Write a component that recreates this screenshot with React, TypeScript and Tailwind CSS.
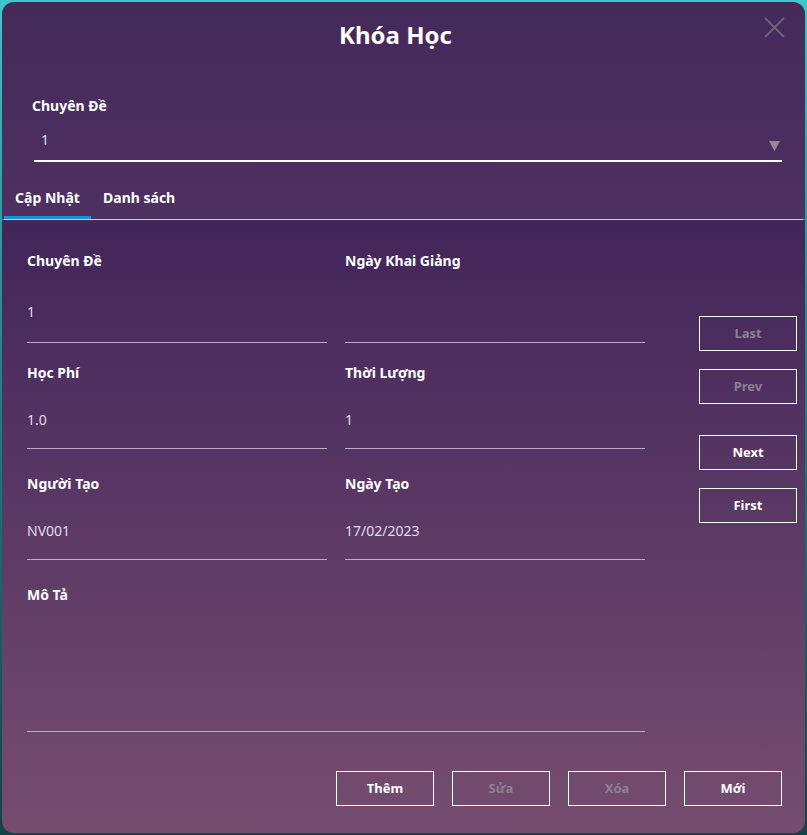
import React from "react";

const font = { fontFamily: '"Noto Sans", "Open Sans", sans-serif' };

function Field({ label, value, valueTop, pb }: { label: string; value?: string; valueTop: string; pb: string }) {
  return (
    <div className="flex flex-col">
      <div className="h-[20px] text-[14px] font-bold leading-[20px] text-white">{label}</div>
      <div className={`${valueTop} ${pb} h-auto border-b border-[#b9aec4]`}>
        <div className="h-[20px] text-[14px] leading-[20px] text-[#e4dcec]">{value ?? "\u00a0"}</div>
      </div>
    </div>
  );
}

function Btn({ label, disabled }: { label: string; disabled?: boolean }) {
  return (
    <div
      className={`flex h-[35px] w-[98px] items-center justify-center border-[1.5px] border-white text-[13px] font-bold ${
        disabled ? "text-[#8a8290]" : "text-white"
      }`}
    >
      {label}
    </div>
  );
}

export default function App() {
  return (
    <div
      className="h-[835px] w-[807px] overflow-hidden bg-gradient-to-b from-[#3fc6c9] via-[#1d7c7f] to-[#124445] p-[2px]"
      style={font}
    >
      <div className="flex h-[831px] w-[803px] flex-col overflow-hidden rounded-[12px]">
        {/* top part */}
        <div className="relative flex h-[217px] flex-col bg-gradient-to-b from-[#44295b] to-[#4e3161]">
          <div className="pr-[16px] pt-[16px] text-center text-[24px] font-bold leading-[34px] text-white">Khóa Học</div>
          <svg className="absolute right-[20px] top-[15px]" width="21" height="21" viewBox="0 0 21 21">
            <path d="M1 1 L20 20 M20 1 L1 20" stroke="#6d6470" strokeWidth="2" />
          </svg>
          <div className="ml-[30px] mt-[44px] h-[20px] text-[14px] font-bold leading-[20px] text-white">Chuyên Đề</div>
          <div className="relative ml-[32px] mr-[23px] mt-[14px] flex h-[32px] items-start border-b-2 border-white">
            <span className="ml-[7px] text-[14px] leading-[20px] text-[#e4dcec]">1</span>
            <svg className="absolute right-[2px] top-[11px]" width="11" height="10" viewBox="0 0 11 10">
              <path d="M0 0 L11 0 L5.5 10 Z" fill="#8f8a94" />
            </svg>
          </div>
          <div className="mt-auto flex h-[31px] items-start pl-[2px]">
            <div className="flex h-[31px] w-[87px] flex-col items-center">
              <span className="text-[14px] font-bold leading-[20px] text-white">Cập Nhật</span>
              <div className="mt-auto h-[3px] w-full bg-[#1296d6]" />
            </div>
            <span className="ml-[12px] text-[14px] font-bold leading-[20px] text-white">Danh sách</span>
          </div>
        </div>
        <div className="mx-[2px] h-[1px] bg-[#d0c8d6]" />
        <div className="h-[1px] bg-[#4a2c5f]" />
        {/* content */}
        <div className="flex flex-1 flex-col bg-gradient-to-b from-[#42255a] to-[#764d6f]">
          <div className="flex pl-[25px]">
            <div className="w-[618px]">
              <div className="mt-[30px] grid grid-cols-[300px_300px] gap-x-[18px]">
                <Field label="Chuyên Đề" value="1" valueTop="mt-[31px]" pb="pb-[20px]" />
                <Field label="Ngày Khai Giảng" valueTop="mt-[31px]" pb="pb-[20px]" />
              </div>
              <div className="mt-[20px] grid grid-cols-[300px_300px] gap-x-[18px]">
                <Field label="Học Phí" value="1.0" valueTop="mt-[27px]" pb="pb-[18px]" />
                <Field label="Thời Lượng" value="1" valueTop="mt-[27px]" pb="pb-[18px]" />
              </div>
              <div className="mt-[25px] grid grid-cols-[300px_300px] gap-x-[18px]">
                <Field label="Người Tạo" value="NV001" valueTop="mt-[27px]" pb="pb-[18px]" />
                <Field label="Ngày Tạo" value="17/02/2023" valueTop="mt-[27px]" pb="pb-[18px]" />
              </div>
              <div className="mt-[25px] flex h-[147px] flex-col border-b border-[#b9aec4]">
                <div className="h-[20px] text-[14px] font-bold leading-[20px] text-white">Mô Tả</div>
              </div>
            </div>
            <div className="ml-[54px] mt-[95px] flex flex-col">
              <Btn label="Last" disabled />
              <div className="mt-[18px]">
                <Btn label="Prev" disabled />
              </div>
              <div className="mt-[31px]">
                <Btn label="Next" />
              </div>
              <div className="mt-[18px]">
                <Btn label="First" />
              </div>
            </div>
          </div>
          <div className="mt-[39px] flex gap-x-[18px] pl-[334px]">
            <Btn label="Thêm" />
            <Btn label="Sửa" disabled />
            <Btn label="Xóa" disabled />
            <Btn label="Mới" />
          </div>
        </div>
      </div>
    </div>
  );
}
